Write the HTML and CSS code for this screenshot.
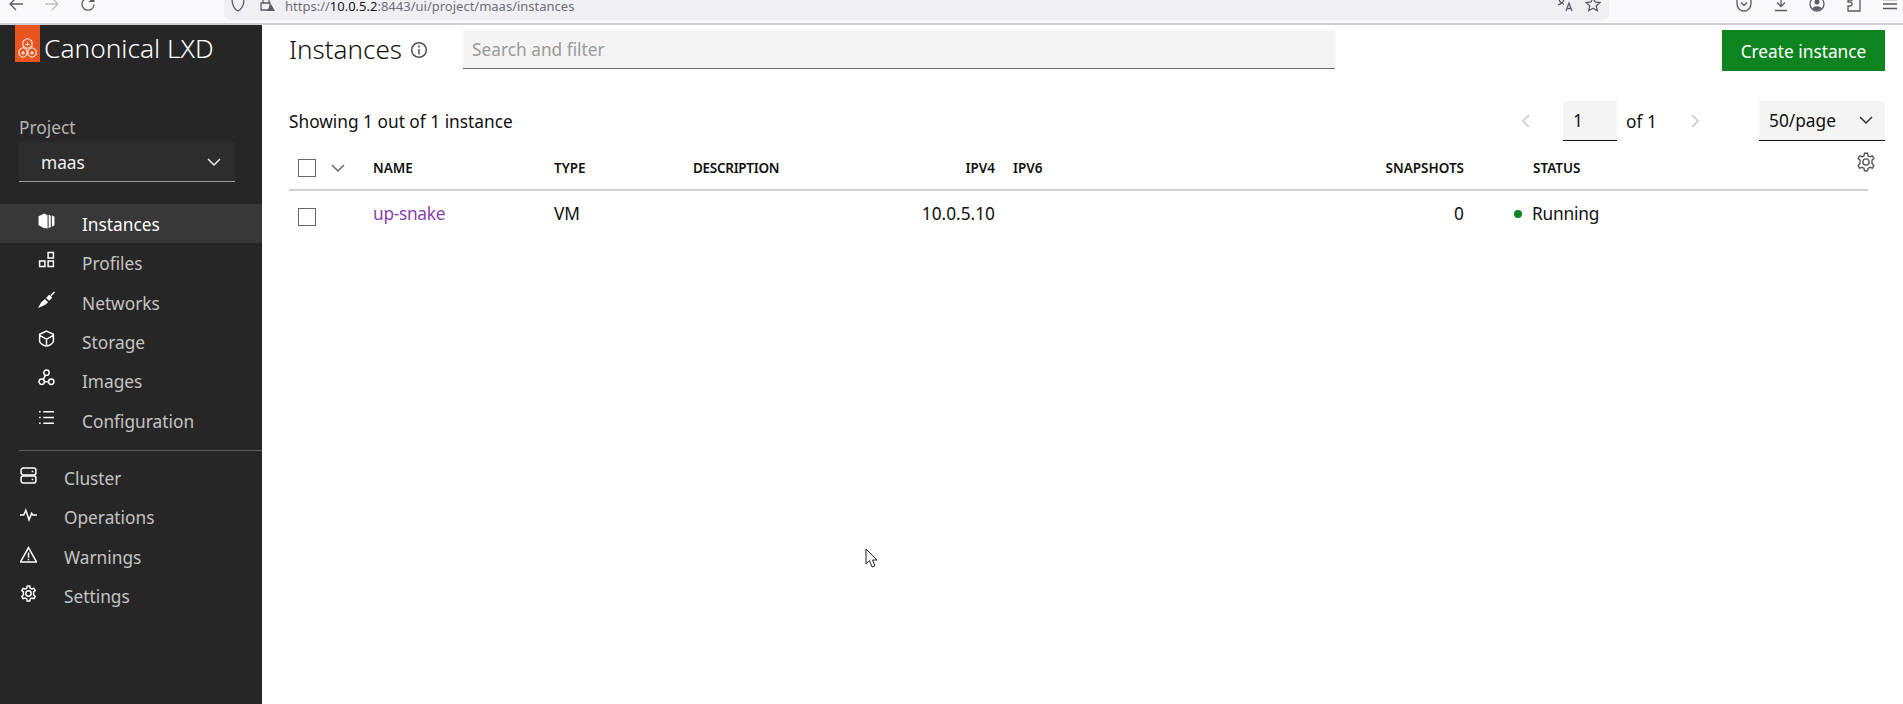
FILE: index.html
```html
<!DOCTYPE html>
<html lang="en">
<head>
<meta charset="utf-8">
<title>Instances | Canonical LXD</title>
<link rel="stylesheet" href="styles.css">
</head>
<body>
<div class="browser">
  <div class="nav-buttons">
    <svg class="bi" viewBox="0 0 16 16"><path d="M15 8H2M8 2 2 8l6 6"/></svg>
    <svg class="bi dim" viewBox="0 0 16 16"><path d="M1 8h13M8 2l6 6-6 6"/></svg>
    <svg class="bi" viewBox="0 0 16 16"><path d="M14 8.500A6 6 0 1 1 11 3"/><path class="fill" d="M14.500 0v6h-6z"/></svg>
  </div>
  <div class="urlbar">
    <svg class="bi shield" viewBox="0 0 16 16"><path d="M8 1C6 2 4 2.500 2 2.500 2 9 4 13 8 15c4-2 6-6 6-12.500C12 2.500 10 2 8 1z"/></svg>
    <svg class="bi lock" viewBox="0 0 16 16"><path d="M4 7V4a3 3 0 0 1 6 0v3M2 7h9v7H2z"/><path class="fill" d="m12 8 4 7H8z"/></svg>
    <span class="url">https://<b>10.0.5.2</b>:8443/ui/project/maas/instances</span>
    <span class="url-space"></span>
    <svg class="bi" viewBox="0 0 16 16"><path d="M1 3h7M4 1v2M7 3c-.5 3-3 5-6 6M2 4c1 2 3 4 5 4M9 15l3-8 3 8M10 12.500h4"/></svg>
    <svg class="bi star" viewBox="0 0 16 16"><path d="m8 1.500 2 4.500 5 .5-3.700 3.300 1 4.900L8 12.300l-4.300 2.400 1-4.900L1 6.500 6 6z"/></svg>
  </div>
  <div class="tools">
    <svg class="bi" viewBox="0 0 16 16"><path d="M2 1.500h12a1 1 0 0 1 1 1V8A7 7 0 0 1 1 8V2.500a1 1 0 0 1 1-1zM5 6.500l3 3 3-3"/></svg>
    <svg class="bi" viewBox="0 0 16 16"><path d="M8 1v9M4 6.500l4 4 4-4M2 14.500h12"/></svg>
    <svg class="bi" viewBox="0 0 16 16"><circle cx="8" cy="8" r="7"/><circle class="fill" cx="8" cy="6" r="2.500"/><path class="fill" d="M3.500 12.500c1-3 8-3 9 0-2 2-7 2-9 0z"/></svg>
    <svg class="bi" viewBox="0 0 16 16"><path d="M10 1h4v14H2v-5h2a2 2 0 0 0 0-4H2V4h5"/></svg>
    <svg class="bi" viewBox="0 0 16 16"><path d="M1 3.500h14M1 8h14M1 12.500h14"/></svg>
  </div>
</div>

<div class="app">
  <aside class="sidebar">
    <div class="brand">
      <div class="logo">
        <svg viewBox="0 0 25 37"><g transform="translate(0 4)"><path d="M12.500 9.500 17 12v5l-4.500 2.500L8 17v-5zM8 18.500l4 2.500v5l-4 2.500L4 26v-5zM17 18.500l4 2.500v5l-4 2.500L13 26v-5z"/><path d="M12.500 13v3.500M8 22v3.500M17 22v3.500M10.500 15.500h4M6 24h4M15 24h4"/></g></svg>
      </div>
      <span class="brand-name">Canonical LXD</span>
    </div>
    <div class="project-label">Project</div>
    <div class="project-select">
      <span>maas</span>
      <svg class="chev" viewBox="0 0 16 16"><path d="m2 5 6 6 6-6"/></svg>
    </div>
    <nav class="nav-main">
      <a class="nav-item active"><svg class="ni" viewBox="0 0 16 16"><path class="solid" d="M.5 4 6 1.500 9 3v12.500L5.500 15 .5 12.500z"/><path class="solid" d="M10 2.500 12 3.500V14l-2 1.200zM13 3l2.500 1.500v8L13 13.800z"/></svg><span>Instances</span></a>
      <a class="nav-item"><svg class="ni" viewBox="0 0 16 16"><path d="M9.500 1.500h5v5h-5zM1.500 9.500h5v5h-5zM9.500 9.500h5v5h-5z"/></svg><span>Profiles</span></a>
      <a class="nav-item"><svg class="ni" viewBox="0 0 16 16"><path class="solid" d="M0 16 3 10.500 5 9l1.500-1.500 3 3L8 12l-2 1.500z"/><path class="solid" d="m7.500 6.500 3-3 3 2.500-3 3.200z"/><path d="m12 4.500 3.500-3.500"/></svg><span>Networks</span></a>
      <a class="nav-item"><svg class="ni" viewBox="0 0 16 16"><path d="M8 1 14.500 4v6.500c0 1-3 4.500-6.500 4.500S1.500 11.500 1.500 10.500V4zM1.500 5 8 8.500 14.500 5M8 8.500V15"/></svg><span>Storage</span></a>
      <a class="nav-item"><svg class="ni" viewBox="0 0 16 16"><circle cx="8" cy="3.500" r="2.500"/><circle cx="3.500" cy="12" r="2.500"/><circle cx="12.500" cy="12" r="2.500"/><path d="M7 6 5 9.500M6 12h4"/></svg><span>Images</span></a>
      <a class="nav-item"><svg class="ni" viewBox="0 0 16 16"><path d="M5 2.500h10M5 8h10M5 13.500h10M1 2.500h1.500M1 8h1.500M1 13.500h1.500"/></svg><span>Configuration</span></a>
    </nav>
    <nav class="nav-secondary">
      <a class="nav-item"><svg class="ni" viewBox="0 0 16 16"><rect x="1" y="1" width="14" height="6.500" rx="2"/><rect x="1" y="8.500" width="14" height="6.500" rx="2"/><path d="M11 4.200h1.500M11 11.800h1.500"/></svg><span>Cluster</span></a>
      <a class="nav-item"><svg class="ni" viewBox="0 0 16 16"><path d="M0 8.500h3.500L5.500 4l3 9 2.500-6 1 1.500h4"/></svg><span>Operations</span></a>
      <a class="nav-item"><svg class="ni" viewBox="0 0 16 16"><path d="M8 1.500 15.500 15H.5zM8 6v5M8 12v1.500"/></svg><span>Warnings</span></a>
      <a class="nav-item"><svg class="ni" viewBox="0 0 16 16"><circle cx="8" cy="8" r="2.500"/><path d="m6.800 1-.4 2-1.500.8-2-.7L1.700 5.200l1.500 1.300v2.900l-1.500 1.400 1.200 2.100 2-.7 1.500.9.400 1.900h2.400l.4-1.900 1.500-.9 2 .7 1.200-2.100-1.500-1.400V6.500l1.500-1.300-1.200-2.100-2 .7-1.500-.8-.4-2z"/></svg><span>Settings</span></a>
    </nav>
  </aside>

  <main class="content">
    <header class="page-head">
      <div class="title-wrap">
        <h1>Instances</h1>
        <svg class="info" viewBox="0 0 16 16"><circle cx="8" cy="8" r="6.500"/><path d="M8 7v5M8 4v1.800"/></svg>
      </div>
      <div class="search">Search and filter</div>
      <button class="create">Create instance</button>
    </header>

    <div class="meta">
      <span class="count">Showing 1 out of 1 instance</span>
      <div class="pager">
        <svg class="pchev" viewBox="0 0 16 16"><path d="M11 2 5 8l6 6"/></svg>
        <div class="page-input">1</div>
        <span class="of">of 1</span>
        <svg class="pchev next" viewBox="0 0 16 16"><path d="m5 2 6 6-6 6"/></svg>
        <div class="per-page">
          <span>50/page</span>
          <svg class="chev dark" viewBox="0 0 16 16"><path d="m2 5 6 6 6-6"/></svg>
        </div>
      </div>
    </div>

    <div class="table-wrap">
      <svg class="gear" viewBox="0 0 16 16"><circle cx="8" cy="8" r="2.500"/><path d="m6.800 1-.4 2-1.500.8-2-.7L1.700 5.200l1.500 1.300v2.900l-1.500 1.400 1.200 2.100 2-.7 1.500.9.400 1.900h2.400l.4-1.900 1.500-.9 2 .7 1.200-2.100-1.500-1.400V6.500l1.500-1.300-1.200-2.100-2 .7-1.500-.8-.4-2z"/></svg>
      <table>
        <colgroup>
          <col class="c-select"><col class="c-name"><col class="c-type"><col class="c-desc"><col class="c-ip4"><col class="c-ip6"><col class="c-snap"><col class="c-status">
        </colgroup>
        <thead>
          <tr>
            <th class="select-cell"><span class="check"></span><svg class="chev head" viewBox="0 0 16 16"><path d="m2 5 6 6 6-6"/></svg></th>
            <th>NAME</th>
            <th>TYPE</th>
            <th class="desc">DESCRIPTION</th>
            <th class="right">IPV4</th>
            <th class="ip6">IPV6</th>
            <th class="right">SNAPSHOTS</th>
            <th class="status-head">STATUS</th>
          </tr>
        </thead>
        <tbody>
          <tr>
            <td class="select-cell"><span class="check low"></span></td>
            <td><a class="inst-link">up-snake</a></td>
            <td>VM</td>
            <td></td>
            <td class="right">10.0.5.10</td>
            <td class="ip6"></td>
            <td class="right">0</td>
            <td class="status-cell"><span class="dot"></span>Running</td>
          </tr>
        </tbody>
      </table>
    </div>
  </main>
</div>

<svg class="cursor" viewBox="0 0 13 21"><path d="M1 1v15l3.500-3.500L7 19l3-1.300-2.500-5.700H12z"/></svg>
</body>
</html>
```
FILE: styles.css
```css
* { box-sizing: border-box; }
html, body { height: 100%; }
body {
  margin: 0;
  display: flex;
  flex-direction: column;
  overflow: hidden;
  font-family: "Noto Sans", "Open Sans", sans-serif;
  font-size: 17.300px;
  color: #111;
  background: #fff;
}

/* browser chrome */
.browser {
  flex: none;
  height: 25px;
  display: flex;
  align-items: flex-start;
  background: #f9f9fb;
  border-bottom: 2px solid #cfcfd3;
  overflow: hidden;
}
.bi {
  flex: none;
  width: 16px;
  height: 16px;
  margin-top: -4px;
  fill: none;
  stroke: #5b5b66;
  stroke-width: 1.300;
}
.bi .fill { fill: #5b5b66; stroke: none; }
.bi.dim { stroke: #bdbdc4; }
.nav-buttons {
  width: 224px;
  display: flex;
  gap: 20px;
  padding-left: 8px;
}
.urlbar {
  width: 1385px;
  height: 20px;
  display: flex;
  align-items: flex-start;
  background: #f0f0f4;
  border-radius: 0 0 6px 6px;
  padding: 0 8px 0 6px;
}
.lock { margin-left: 13px; }
.url {
  margin-left: 10px;
  font-size: 13px;
  line-height: 13px;
  color: #6e6e78;
  white-space: nowrap;
}
.url b { font-weight: 400; color: #15141a; }
.url-space { flex: 1; }
.star { margin: -4px 0 0 12px; }
.tools {
  flex: 1;
  display: flex;
  gap: 20.500px;
  padding-left: 127px;
}

/* app shell */
.app { flex: 1; min-height: 0; display: flex; }
.sidebar {
  flex: none;
  width: 262px;
  background: #262626;
  color: #c4c4c4;
}
.brand { height: 37px; display: flex; align-items: flex-start; padding-left: 15px; }
.logo { width: 25px; height: 37px; background: #e95420; }
.logo svg {
  display: block;
  width: 25px;
  height: 37px;
  fill: none;
  stroke: #fff;
  stroke-width: 1;
}
.brand-name {
  margin-left: 4px;
  padding-top: 5px;
  color: #fff;
  font-size: 26.300px;
  font-weight: 300;
  line-height: 37px;
  white-space: nowrap;
}
.project-label {
  margin: 53px 0 0 19px;
  line-height: 26px;
  color: #b5b5b5;
}
.project-select {
  margin: 1px 27px 0 19px;
  height: 40px;
  display: flex;
  align-items: center;
  justify-content: space-between;
  padding: 1px 13px 0 22px;
  background: #2d2d2d;
  border-bottom: 1px solid #9a9a9a;
  color: #f0f0f0;
}
.chev {
  width: 16px;
  height: 16px;
  fill: none;
  stroke: #f0f0f0;
  stroke-width: 1.500;
}
.chev.dark { stroke: #333; }
.nav-main { margin-top: 22px; padding-bottom: 10px; }
.nav-item {
  height: 39.300px;
  display: flex;
  align-items: center;
  padding-left: 38px;
  white-space: nowrap;
}
.nav-item span { margin-left: 27px; }
.nav-main .nav-item span { padding-top: 2px; }
.nav-item.active { background: #373737; color: #fff; }
.ni {
  flex: none;
  width: 17px;
  height: 17px;
  margin-top: -6px;
  fill: none;
  stroke: #fff;
  stroke-width: 1.400;
}
.ni .solid { fill: #fff; stroke: none; }
.nav-secondary {
  margin: 0 0 0 19px;
  padding-top: 8px;
  border-top: 1px solid #5f5f5f;
}
.nav-secondary .nav-item { padding-left: 1px; }

/* content */
.content { flex: 1; min-width: 0; padding: 5px 18px 0 27px; }
.page-head { display: flex; align-items: flex-start; }
.title-wrap {
  width: 174px;
  height: 38px;
  display: flex;
  align-items: center;
}
h1 {
  margin: 0;
  font-size: 26px;
  font-weight: 300;
  line-height: 34px;
}
.info {
  width: 18px;
  height: 18px;
  margin: 2px 0 0 8px;
  fill: none;
  stroke: #555;
  stroke-width: 1.400;
}
.search {
  width: 872px;
  height: 39px;
  padding: 0 9px;
  line-height: 40px;
  background: #f4f4f4;
  border-bottom: 1px solid #6e6e6e;
  color: #9a9a9a;
}
.create {
  margin-left: auto;
  width: 163px;
  height: 41px;
  padding: 1px 0 0;
  border: 0;
  background: #0e8420;
  color: #fff;
  font: inherit;
}
.meta {
  margin-top: 30px;
  height: 40px;
  display: flex;
  align-items: center;
  justify-content: space-between;
}
.pager { display: flex; align-items: center; height: 40px; }
.pchev {
  width: 16px;
  height: 16px;
  fill: none;
  stroke: #c6c6c6;
  stroke-width: 1.500;
}
.page-input {
  margin-left: 29px;
  width: 54px;
  height: 40px;
  padding-left: 10px;
  line-height: 39px;
  background: #f4f4f4;
  border-bottom: 1px solid #111;
}
.of { margin-left: 9px; width: 59px; }
.next { margin-left: 2px; }
.per-page {
  margin-left: 56px;
  width: 126px;
  height: 40px;
  display: flex;
  align-items: center;
  justify-content: space-between;
  padding: 0 11px 1px 10px;
  background: #f4f4f4;
  border-bottom: 1px solid #111;
}
.table-wrap { position: relative; width: 1579px; margin-top: 5px; }
.gear {
  position: absolute;
  top: 6px;
  right: -8px;
  width: 20px;
  height: 20px;
  fill: none;
  stroke: #555;
  stroke-width: 1.100;
}
table { width: 100%; table-layout: fixed; border-collapse: collapse; }
.c-select { width: 84px; }
.c-name { width: 181px; }
.c-type { width: 139px; }
.c-desc { width: 161px; }
.c-ip4 { width: 141px; }
.c-ip6 { width: 305px; }
.c-snap { width: 164px; }
th {
  height: 44px;
  padding: 0;
  text-align: left;
  font-size: 13.500px;
  font-weight: 600;
  border-bottom: 2px solid #d0d0d0;
  white-space: nowrap;
}
th.desc { letter-spacing: -.3px; }
td { height: 46px; padding: 0; white-space: nowrap; }
th.right, td.right { text-align: right; }
.ip6 { padding-left: 18px; }
.status-head { padding-left: 69px; }
.status-cell { padding-left: 50px; letter-spacing: -.2px; }
.select-cell { padding-left: 9px; }
.check {
  display: inline-block;
  width: 18px;
  height: 18px;
  border: 1px solid #666;
  background: #fff;
  vertical-align: middle;
}
.check.low { margin-top: 6px; }
.chev.head { margin-left: 14px; vertical-align: middle; stroke: #666; }
.inst-link { color: #8a3fb0; letter-spacing: -.3px; }
.dot {
  display: inline-block;
  width: 8px;
  height: 8px;
  margin-right: 10px;
  border-radius: 50%;
  background: #0e8420;
  vertical-align: 2px;
}

/* pointer */
.cursor {
  position: absolute;
  left: 865px;
  top: 548px;
  width: 13px;
  height: 21px;
  fill: #fff;
  stroke: #222;
  stroke-width: 1;
}
```
